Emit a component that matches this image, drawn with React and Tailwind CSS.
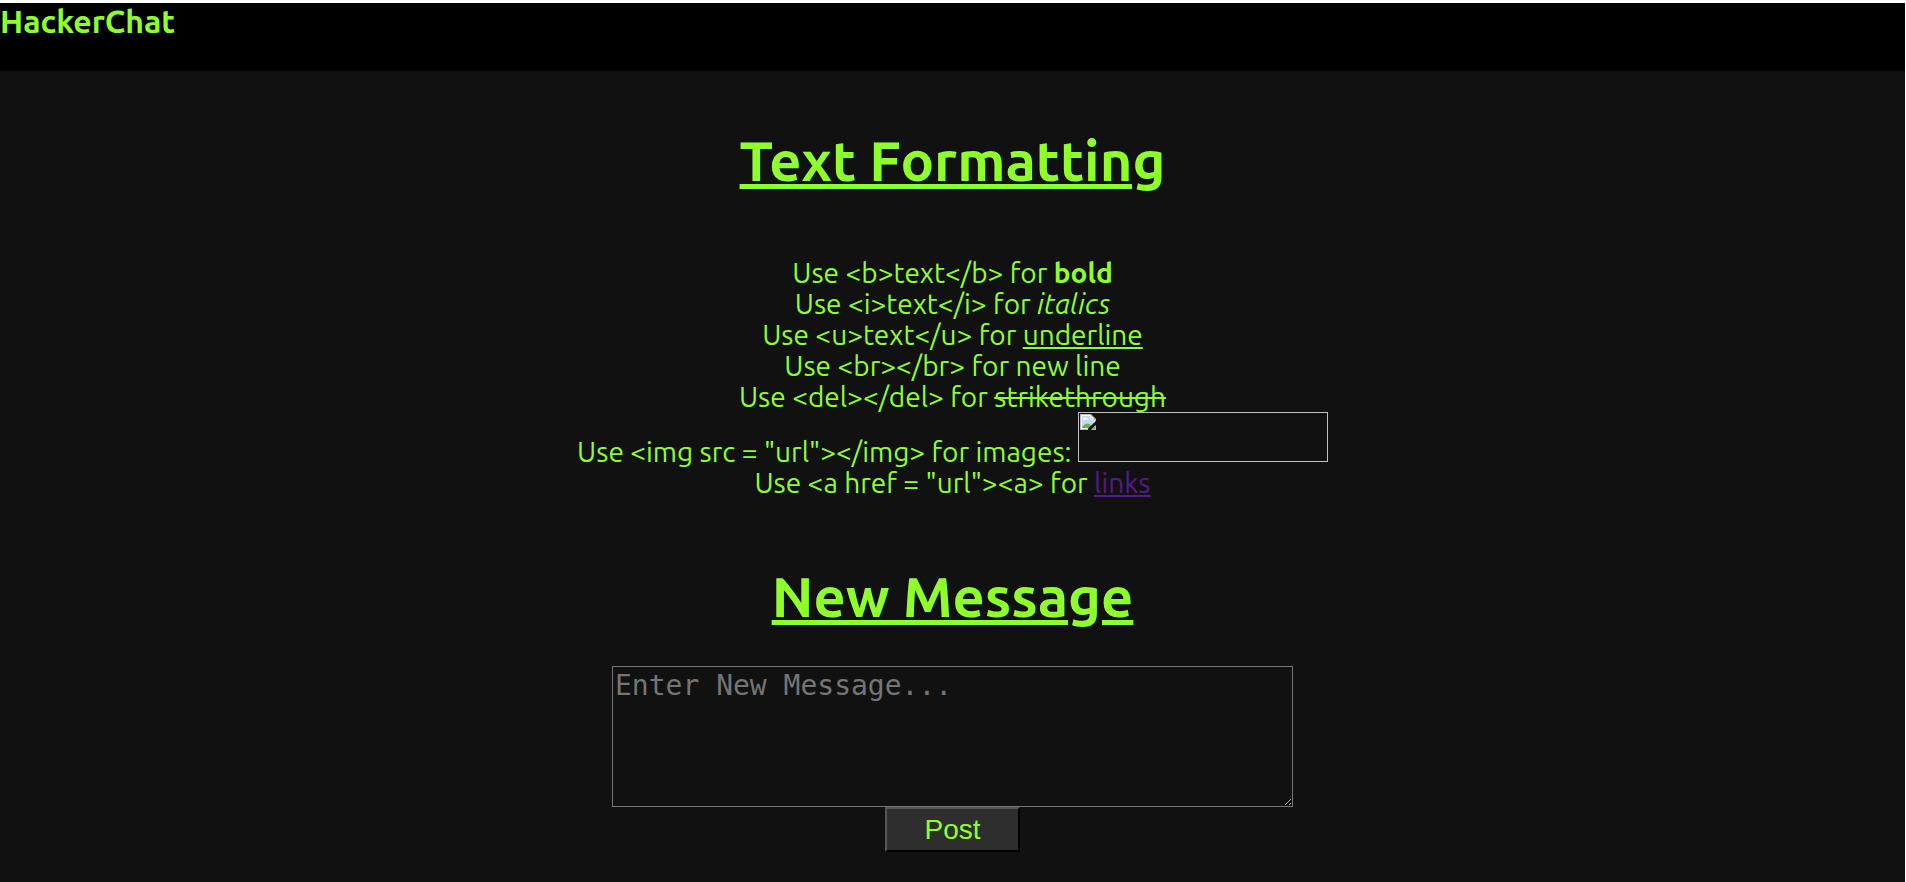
function BrokenImage() {
  return (
    <span
      role="img"
      aria-label="Example image"
      className="inline-block h-[50px] w-[250px] border border-[#c0c0c0] p-px align-baseline"
    >
      <svg width="16" height="16" viewBox="0 0 16 16" className="block" aria-hidden="true">
        <path d="M0 0H11L16 5V16H0Z" fill="#b8b8b8" />
        <path d="M1 1H10.5L15 5.500V15H1Z" fill="#fff" />
        <path d="M2 2H10V6H14V14H2Z" fill="#c6d6f6" />
        <path d="M3 6V5Q3 4 4.200 4Q5 2.500 6.300 4Q8 4 8 6Z" fill="#fff" />
        <path d="M2 14V13Q5 9 8 9.500Q11 10 12 14Z" fill="#71b045" />
        <path d="M11 1V5H15Z" fill="#fff" stroke="#aaa" strokeWidth="0.7" />
        <path d="M16 7L8 14.500V16H11L16 11Z" fill="#111" />
        <path d="M11.500 16L16 11.500V16Z" fill="#b8b8b8" />
        <path d="M12.500 15L15 12.500V15Z" fill="#71b045" />
      </svg>
    </span>
  );
}

function Heading({ children }) {
  return (
    <h1 className="text-center text-[56px] leading-[64px] font-semibold underline decoration-[5px] underline-offset-[3px]">
      {children}
    </h1>
  );
}

export default function App() {
  return (
    <div className="min-h-screen border-t-[3px] border-r border-t-white border-r-white bg-[#111] font-[Ubuntu,'Noto_Sans',sans-serif] text-[#8fff2b]">
      <header className="h-[68px] bg-black text-[32px] leading-[36px] font-semibold">
        HackerChat
      </header>
      <main className="flex flex-col items-center px-4 pt-[58px]">
        <Heading>Text Formatting</Heading>
        <div className="pt-[64px] pb-[67px] text-center text-[28px] leading-[31px] font-normal">
          <p>Use &lt;b&gt;text&lt;/b&gt; for <b className="font-bold">bold</b></p>
          <p>Use &lt;i&gt;text&lt;/i&gt; for <i>italics</i></p>
          <p>Use &lt;u&gt;text&lt;/u&gt; for <u className="decoration-2 underline-offset-2">underline</u></p>
          <p>Use &lt;br&gt;&lt;/br&gt; for new line</p>
          <p>Use &lt;del&gt;&lt;/del&gt; for <del className="decoration-2">strikethrough</del></p>
          <p>Use &lt;img src = "url"&gt;&lt;/img&gt; for images: <BrokenImage /></p>
          <p>
            Use &lt;a href = "url"&gt;&lt;a&gt; for{" "}
            <a href="#links" className="text-[#551a8b] underline decoration-2 underline-offset-2">links</a>
          </p>
        </div>
        <Heading>New Message</Heading>
        <form className="flex w-full flex-col items-center pt-[37px]" onSubmit={(e) => e.preventDefault()}>
          <textarea
            aria-label="New message"
            placeholder="Enter New Message..."
            className="block h-[141px] w-[681px] max-w-full resize border border-[#767676] bg-transparent p-[2px] font-['DejaVu_Sans_Mono',monospace] text-[28px] leading-[33px] placeholder:text-[#757575]"
          />
          <button
            type="submit"
            className="h-[45px] w-[135px] border-2 border-t-[#555] border-r-black border-b-black border-l-[#555] bg-[#2e2e2e] font-['Liberation_Sans',sans-serif] text-[28px] leading-[32px]"
          >
            Post
          </button>
        </form>
      </main>
    </div>
  );
}
